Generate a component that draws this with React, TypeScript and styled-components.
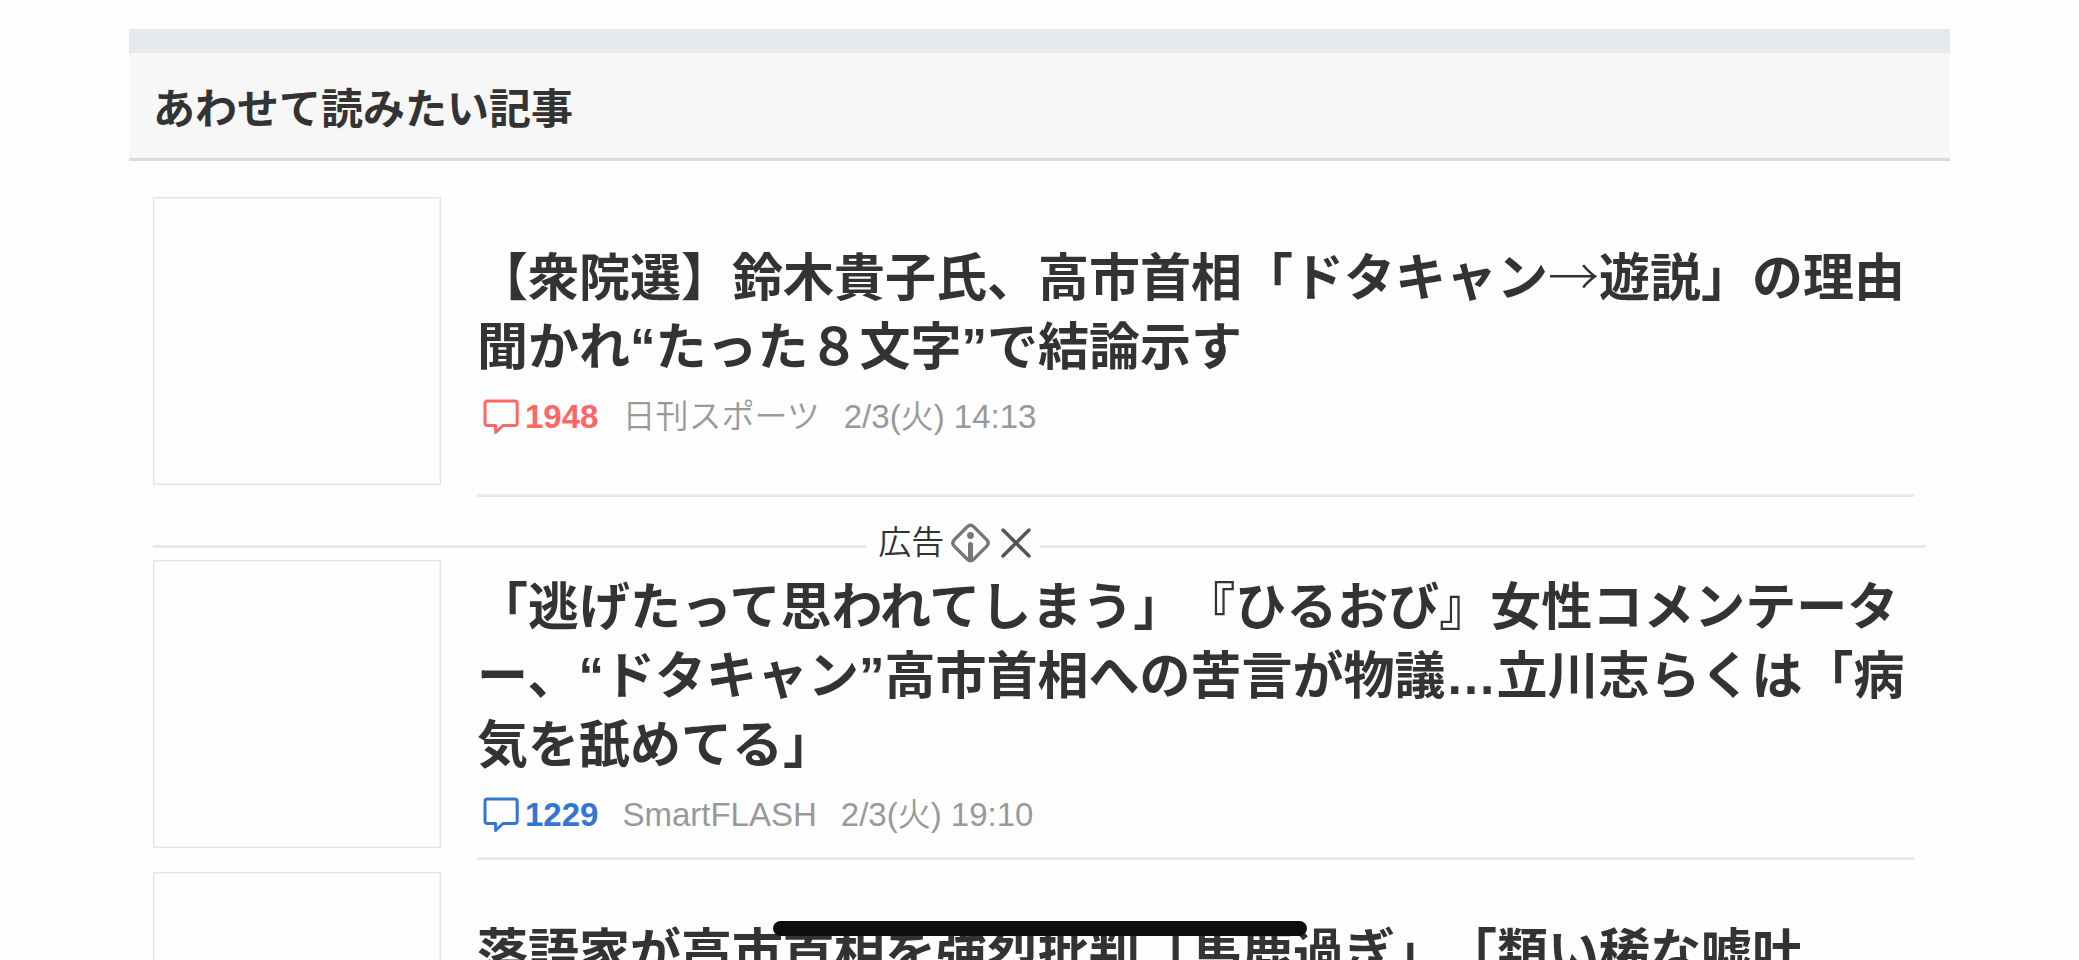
import React from "react";
import styled, { createGlobalStyle } from "styled-components";

const GlobalStyle = createGlobalStyle`
  body {
    margin: 0;
    background: #fefefe;
    color: #333;
    font-family: "Liberation Sans", "Noto Sans CJK JP", sans-serif;
    text-spacing-trim: space-all;
  }
`;

const Page = styled.main`
  box-sizing: border-box;
  height: 100vh;
  overflow: hidden;
  padding: 29px 129px 0;
`;

const SectionHeader = styled.header`
  border-top: 24px solid #e5eaee;
  border-bottom: 3px solid #d6dbe1;
  background: #f7f7f7;
  padding: 28px 24px 20px;
`;

const SectionTitle = styled.h2`
  margin: 0;
  font-size: 42px;
  line-height: 57px;
  font-weight: 700;
`;

const List = styled.div`
  padding: 36px 24px 0;
`;

const Article = styled.article`
  display: grid;
  grid-template-columns: 288px 1fr;
  column-gap: 36px;
  margin-bottom: 12px;
`;

const Thumb = styled.div`
  box-sizing: border-box;
  height: 288px;
  border: 1px solid #e3e3e3;
  box-shadow: inset 0 0 0 1px #f2f2f2;
`;

const Body = styled.div`
  display: flex;
  flex-direction: column;
  justify-content: center;
  gap: 12px;
  height: 286px;
  margin-right: 12px;
  padding: 2px 0 9px;
  border-bottom: 3px solid #e5eaee;
`;

const Headline = styled.h3`
  margin: 0;
  min-height: 138px;
  font-size: 51px;
  line-height: 69px;
  font-weight: 700;
`;

const HeadlineLink = styled.a`
  color: inherit;
  text-decoration: none;
`;

const Arrow = styled.span`
  font-family: "Noto Sans CJK JP", sans-serif;
  font-weight: 300;
  line-height: 1;
`;

const Meta = styled.div`
  display: flex;
  align-items: center;
  gap: 24px;
  height: 46px;
  font-size: 33px;
  line-height: 46px;
  font-weight: 350;
  color: #999;
  white-space: nowrap;
`;

const Comments = styled.span<{ $hot?: boolean }>`
  display: flex;
  align-items: center;
  gap: 6px;
  padding-left: 6px;
  font-weight: 700;
  color: ${(p) => (p.$hot ? "#ff6666" : "#3375d3")};
`;

const AdDivider = styled.div`
  position: relative;
  margin: 48px 0 12px;
  border-top: 3px solid #e5eaee;
`;

const AdLabel = styled.div`
  position: absolute;
  top: -26px;
  left: calc(40% + 4px);
  display: flex;
  align-items: center;
  gap: 2px;
  padding: 0 1px 0 12px;
  background: rgba(254, 254, 254, 0.9);
  font-size: 33px;
  line-height: 42px;
  font-weight: 350;
`;

const IconButton = styled.button`
  display: flex;
  padding: 0;
  border: 0;
  background: none;
  cursor: pointer;
`;

const HomeIndicator = styled.div`
  position: fixed;
  bottom: 24px;
  left: 50%;
  transform: translateX(-50%);
  width: 534px;
  height: 15px;
  border-radius: 8px;
  background: #0e0e0e;
`;

const CommentIcon = () => (
  <svg width="36" height="36" viewBox="0 0 36 36" fill="none" stroke="currentColor" strokeWidth="3" strokeLinejoin="round" aria-hidden="true">
    <path d="M4.5 2H31.5Q34.2 2 34.2 4.6V23.9Q34.2 26.5 31.5 26.5H20L12.6 33.5V26.5H4.5Q2 26.5 2 23.9V4.6Q2 2 4.5 2Z" />
  </svg>
);

const InfoIcon = () => (
  <svg width="48" height="42" viewBox="0 0 48 42" fill="none" aria-hidden="true">
    <path
      d="M21.3 4.7Q24.5 1.9 27.7 4.7L40.8 17.8Q43.6 21 40.8 24.2L27.7 37.3Q24.5 40.1 21.3 37.3L8.2 24.2Q5.4 21 8.2 17.8Z"
      stroke="#777"
      strokeWidth="3.4"
    />
    <circle cx="24.5" cy="13.4" r="3.4" fill="#777" />
    <path d="M24.5 22.5V37" stroke="#777" strokeWidth="5" strokeLinecap="round" />
    <path d="M18.5 35.5H30.5L26.5 39.5H22.5Z" fill="#777" />
  </svg>
);

const CloseIcon = () => (
  <svg width="43" height="42" viewBox="0 0 43 42" fill="none" stroke="#555" strokeWidth="3.4" strokeLinecap="round" aria-hidden="true">
    <path d="M7 8L33 34M33 8L7 34" />
  </svg>
);

type Story = {
  title: React.ReactNode;
  comments?: number;
  hot?: boolean;
  source?: string;
  date?: string;
};

const stories: Story[] = [
  {
    title: (
      <>
        【衆院選】鈴木貴子氏、高市首相「ドタキャン<Arrow>→</Arrow>遊説」の理由聞かれ“たった８文字”で結論示す
      </>
    ),
    comments: 1948,
    hot: true,
    source: "日刊スポーツ",
    date: "2/3(火) 14:13",
  },
  {
    title:
      "「逃げたって思われてしまう」『ひるおび』女性コメンテーター、“ドタキャン”高市首相への苦言が物議…立川志らくは「病気を舐めてる」",
    comments: 1229,
    source: "SmartFLASH",
    date: "2/3(火) 19:10",
  },
  { title: "落語家が高市首相を強烈批判「馬鹿過ぎ」「類い稀な嘘吐" },
];

const StoryRow = ({ story }: { story: Story }) => (
  <Article>
    <Thumb />
    <Body>
      <Headline>
        <HeadlineLink href="#">{story.title}</HeadlineLink>
      </Headline>
      <Meta>
        {story.comments && (
          <Comments $hot={story.hot}>
            <CommentIcon />
            {story.comments}
          </Comments>
        )}
        {story.source && <span>{story.source}</span>}
        {story.date && <time>{story.date}</time>}
      </Meta>
    </Body>
  </Article>
);

export default function App() {
  const [first, ...rest] = stories;
  return (
    <>
      <GlobalStyle />
      <Page lang="ja">
        <SectionHeader>
          <SectionTitle>あわせて読みたい記事</SectionTitle>
        </SectionHeader>
        <List>
          <StoryRow story={first} />
          <AdDivider>
            <AdLabel>
              広告
              <IconButton aria-label="広告について">
                <InfoIcon />
              </IconButton>
              <IconButton aria-label="広告を閉じる">
                <CloseIcon />
              </IconButton>
            </AdLabel>
          </AdDivider>
          {rest.map((story, index) => (
            <StoryRow key={index} story={story} />
          ))}
        </List>
      </Page>
      <HomeIndicator />
    </>
  );
}
